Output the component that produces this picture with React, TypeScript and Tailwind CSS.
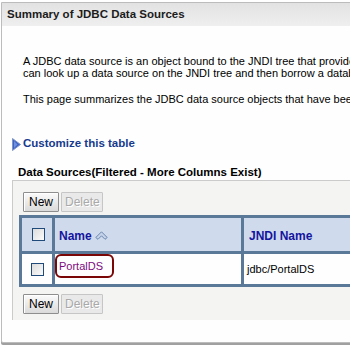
import React from "react";

const FONT = "font-['Liberation_Sans',Arial,sans-serif]";

function Checkbox() {
  return (
    <span className="block h-[13px] w-[13px] border border-[#1f4a7a] bg-gradient-to-br from-[#dcdcdc] to-[#fbfbfb]" />
  );
}

function Button({ label, disabled }: { label: string; disabled?: boolean }) {
  return (
    <button
      type="button"
      className={`h-[20px] w-full rounded-[1px] border px-[3px] text-[12px] leading-none ${
        disabled
          ? "border-[#c6c6c6] bg-[#e9e9e9] text-[#a9a9a9] [text-shadow:1px_1px_0_#fff]"
          : "border-[#8e8e8e] bg-gradient-to-b from-[#fbfbfb] to-[#dadada] text-black shadow-[inset_1px_1px_0_#fff]"
      }`}
    >
      {label}
    </button>
  );
}

function ButtonBar() {
  return (
    <div className="ml-[4px] flex h-[20px] gap-[2px]">
      <div className="w-[36px]">
        <Button label="New" />
      </div>
      <div className="w-[42px]">
        <Button label="Delete" disabled />
      </div>
    </div>
  );
}

function SortIcon() {
  return (
    <svg width="13" height="9" viewBox="0 0 13 9" className="ml-[3px]">
      <path
        d="M6.5 0.8 L12.2 6.5 L10 8.3 L6.5 4.8 L3 8.3 L0.8 6.5 Z"
        fill="#c5d3e8"
        stroke="#6b86b0"
        strokeWidth="1"
      />
    </svg>
  );
}

export default function App() {
  return (
    <div className={`h-[348px] w-[350px] overflow-hidden bg-white pl-[1px] pt-[2px] ${FONT}`}>
      <div className="w-[700px] rounded-bl-[2px] border border-[#bcbcbc] bg-[#fdfefd] pb-[22px] shadow-[0_2px_0_#a0a0a0]">
        {/* title bar */}
        <div className="flex h-[23px] items-center bg-gradient-to-b from-[#e2e2e2] to-[#efefef] pl-[5px] text-[11.5px] font-bold text-[#1c1c1c]">
          Summary of JDBC Data Sources
        </div>

        <div className="pl-[10px]">
          <div className="ml-[11px] mt-[29px] text-[11px] leading-[12px] text-black">
            <p className="whitespace-nowrap">
              A JDBC data source is an object bound to the JNDI tree that provides database connectivity through a pool of
              JDBC connections. Applications
            </p>
            <p className="whitespace-nowrap">
              can look up a data source on the JNDI tree and then borrow a database connection from a data source.
            </p>
            <p className="mt-[14px] whitespace-nowrap">
              This page summarizes the JDBC data source objects that have been created in this domain.
            </p>
          </div>

          <div className="mt-[31px] flex h-[16px] items-center">
            <svg width="9" height="13" viewBox="0 0 9 13">
              <path d="M0.5 0.5 L8.5 6.5 L0.5 12.5 Z" fill="#3f63c4" stroke="#7f95c8" strokeWidth="1" />
              <path d="M2 3 L5.5 6.5 L2 10 Z" fill="#6f8fe0" />
            </svg>
            <span className="ml-[2px] text-[11.5px] font-bold text-[#173a8e]">Customize this table</span>
          </div>

          <div className="mt-[12px] pl-[6px] text-[11.5px] font-bold leading-[16px] text-black">
            Data Sources(Filtered - More Columns Exist)
          </div>

          <div className="w-[660px] border-l border-t border-[#cbcbcb] bg-[#f4f4f3] pb-[9px] pl-[6px] pt-[8px]">
            <ButtonBar />

            <div className="mb-[4px] mt-[6px] w-[520px] border-[3px] border-[#5a7898] text-[11px]">
              <div className="flex h-[36px] border-b-[3px] border-[#5a7898] bg-[#cfdbec]">
                <div className="flex w-[33px] items-center justify-center border-r-[3px] border-[#5a7898] pl-[2px]">
                  <Checkbox />
                </div>
                <div className="flex w-[189px] items-center border-r-[3px] border-[#5a7898] pl-[4px] pt-[2px] text-[12px] font-bold text-[#1414a0]">
                  Name
                  <SortIcon />
                </div>
                <div className="flex flex-1 items-center pl-[5px] pt-[2px] text-[12px] font-bold text-[#1414a0]">
                  JNDI Name
                </div>
              </div>
              <div className="flex h-[30px] bg-[#fdfefd]">
                <div className="flex w-[33px] items-center justify-center border-r-[3px] border-[#5a7898] pl-[1px]">
                  <Checkbox />
                </div>
                <div className="flex w-[189px] items-start border-r-[3px] border-[#5a7898]">
                  <span className="flex h-[24px] items-center rounded-[6px] border-2 border-[#7a0606] pl-[2px] pr-[9px] text-[#7d0a82]">
                    PortalDS
                  </span>
                </div>
                <div className="flex flex-1 items-center pl-[3px] text-black">jdbc/PortalDS</div>
              </div>
            </div>

            <ButtonBar />
          </div>
        </div>
      </div>
    </div>
  );
}
